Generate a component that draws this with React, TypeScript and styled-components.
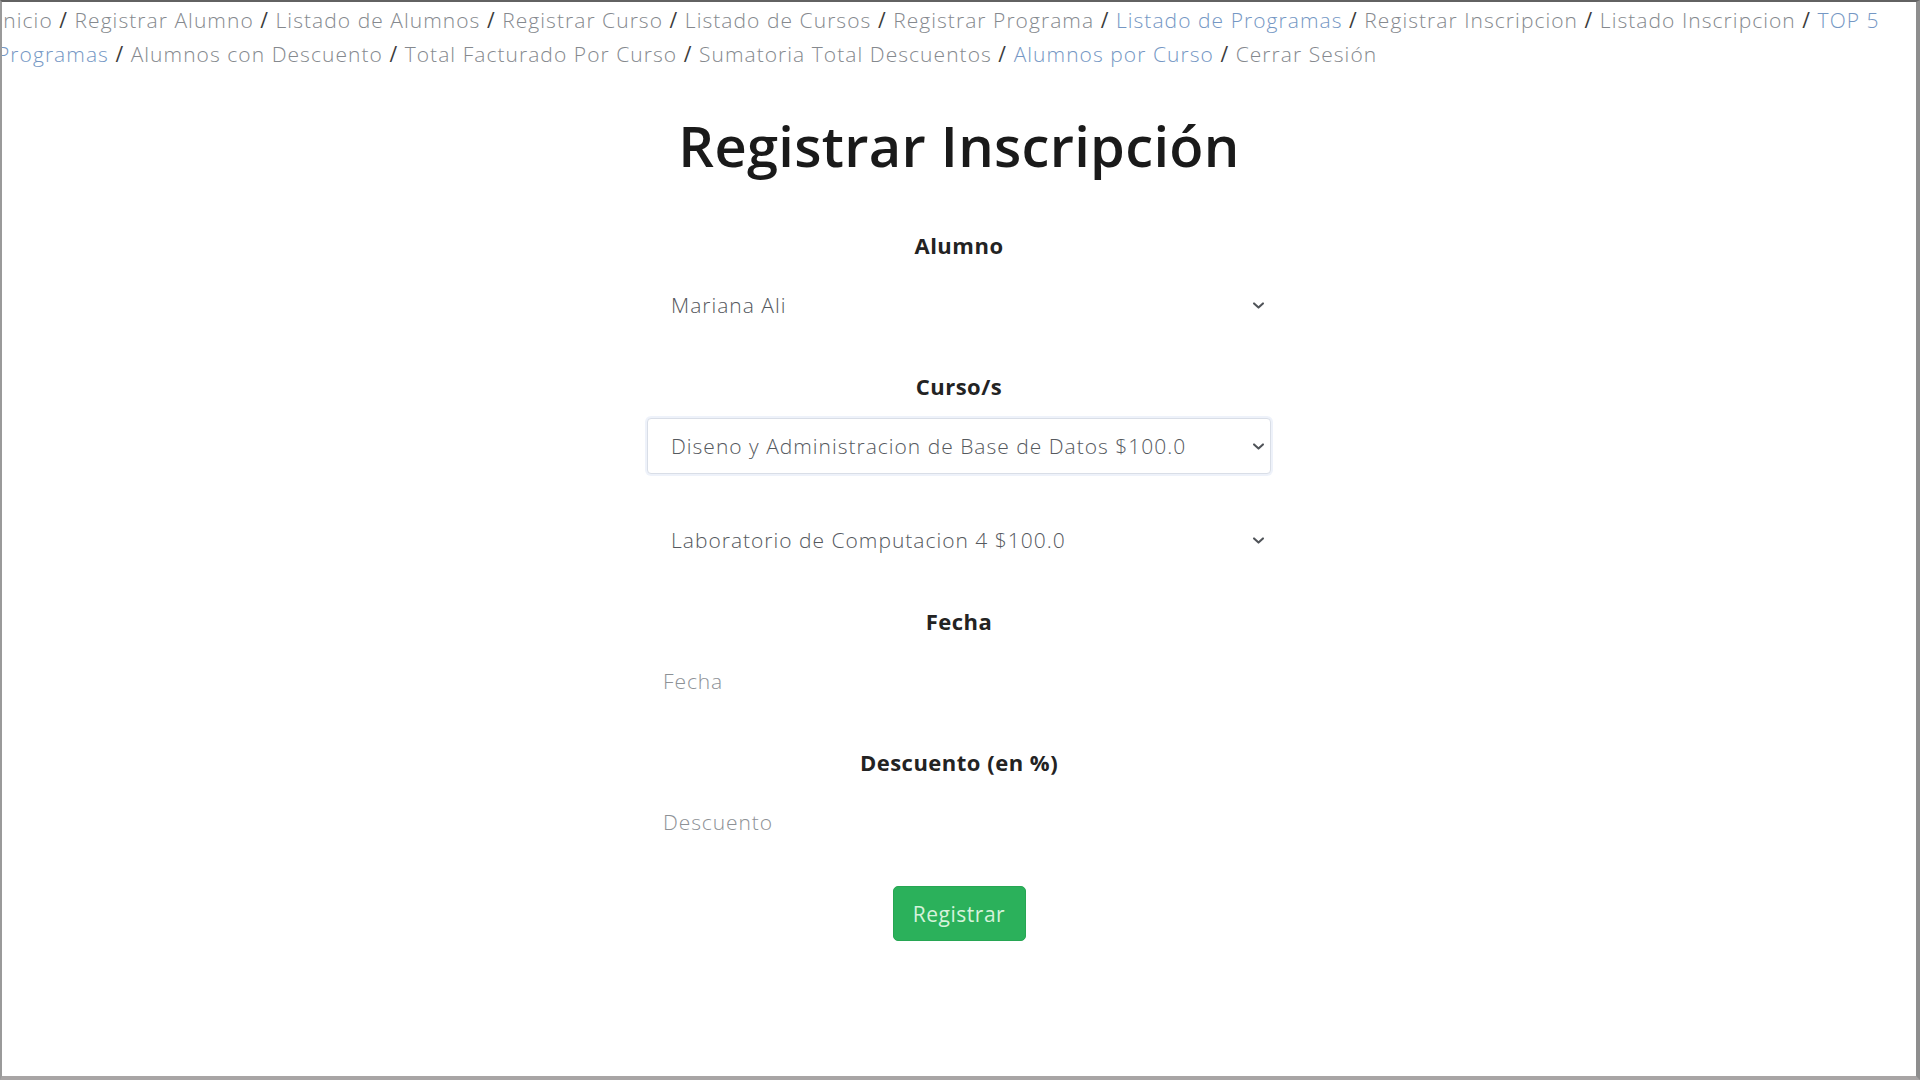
import React from "react";
import styled, { createGlobalStyle } from "styled-components";

const GlobalStyle = createGlobalStyle`
  html, body {
    margin: 0;
    padding: 0;
    background: #ffffff;
  }
  body {
    font-family: "Open Sans", "Noto Sans", "Liberation Sans", sans-serif;
    color: #212529;
  }
  * { box-sizing: border-box; }
`;

const Frame = styled.div`
  min-height: 100vh;
  overflow: hidden;
  background: #ffffff;
  border-top: 2px solid #626262;
  border-left: 2px solid #9a9a9a;
  border-right: 4px solid #8e8e8e;
  border-bottom: 4px solid #a8a5a5;
`;

const Nav = styled.nav`
  margin-left: -5px;
  padding-top: 1px;
  font-size: 21px;
  font-weight: 300;
  letter-spacing: 1.05px;
  line-height: 34px;
  color: #3a3a3a;
`;

const NavLink = styled.a<{ $tone: "gray" | "blue" }>`
  color: ${(p) => (p.$tone === "blue" ? "#7597c4" : "#85898e")};
  text-decoration: none;
`;

const Sep = styled.span`
  color: #3c3c3c;
  font-weight: 400;
`;

const Main = styled.main`
  display: flex;
  flex-direction: column;
  align-items: center;
  padding-top: 41px;
`;

const Title = styled.h1`
  margin: 0 0 51px;
  font-size: 56px;
  line-height: 67px;
  font-weight: 600;
  letter-spacing: 0.3px;
  color: #1a1a1a;
  text-align: center;
`;

const Form = styled.form`
  width: 624px;
  display: flex;
  flex-direction: column;
  align-items: stretch;
  gap: 38px;
`;

const Group = styled.div`
  display: flex;
  flex-direction: column;
  gap: 38px;
`;

const Label = styled.label`
  display: block;
  margin-bottom: -21px;
  font-size: 22px;
  line-height: 30px;
  font-weight: 700;
  letter-spacing: 0.5px;
  color: #232323;
  text-align: center;
`;

const chevron =
  "url(\"data:image/svg+xml,%3csvg xmlns='http://www.w3.org/2000/svg' viewBox='0 0 16 16'%3e%3cpath fill='none' stroke='%23505459' stroke-linecap='round' stroke-linejoin='round' stroke-width='2.6' d='m2.5 5.5 5.5 5 5.5-5'/%3e%3c/svg%3e\")";

const Select = styled.select<{ $focused?: boolean }>`
  display: block;
  width: 100%;
  height: 56px;
  padding: 0 40px 0 23px;
  font-family: inherit;
  font-size: 21px;
  font-weight: 300;
  letter-spacing: 1px;
  color: #55595e;
  background-color: #ffffff;
  background-image: ${chevron};
  background-repeat: no-repeat;
  background-position: right 3px center;
  background-size: 17px 13px;
  border: 1px solid ${(p) => (p.$focused ? "#d9dee7" : "transparent")};
  border-radius: 4px;
  box-shadow: ${(p) => (p.$focused ? "0 0 0 2px rgba(226, 234, 246, 0.6)" : "none")};
  appearance: none;
  -webkit-appearance: none;
  outline: none;
`;

const Input = styled.input`
  display: block;
  width: 100%;
  height: 56px;
  padding: 0 15px;
  font-family: inherit;
  font-size: 21px;
  font-weight: 300;
  letter-spacing: 0.9px;
  color: #55595e;
  background: #ffffff;
  border: 1px solid transparent;
  border-radius: 4px;
  outline: none;
  &::placeholder {
    color: #8d9196;
  }
`;

const Actions = styled.div`
  display: flex;
  justify-content: center;
  margin-top: -2px;
`;

const Button = styled.button`
  width: 133px;
  height: 55px;
  font-family: inherit;
  font-size: 21px;
  letter-spacing: 0.5px;
  color: #d6f3db;
  background: #2bb15b;
  border: 1px solid #27a653;
  border-radius: 5px;
  cursor: pointer;
`;

type Tone = "gray" | "blue";
const links: { label: string; tone: Tone }[] = [
  { label: "Inicio", tone: "gray" },
  { label: "Registrar Alumno", tone: "gray" },
  { label: "Listado de Alumnos", tone: "gray" },
  { label: "Registrar Curso", tone: "gray" },
  { label: "Listado de Cursos", tone: "gray" },
  { label: "Registrar Programa", tone: "gray" },
  { label: "Listado de Programas", tone: "blue" },
  { label: "Registrar Inscripcion", tone: "gray" },
  { label: "Listado Inscripcion", tone: "gray" },
  { label: "TOP 5 Programas", tone: "blue" },
  { label: "Alumnos con Descuento", tone: "gray" },
  { label: "Total Facturado Por Curso", tone: "gray" },
  { label: "Sumatoria Total Descuentos", tone: "gray" },
  { label: "Alumnos por Curso", tone: "blue" },
  { label: "Cerrar Sesión", tone: "gray" },
];

export default function App() {
  return (
    <>
      <GlobalStyle />
      <Frame>
        <Nav>
          {links.map((l, i) => (
            <React.Fragment key={l.label}>
              {i > 0 && <Sep> / </Sep>}
              <NavLink href="#" $tone={l.tone}>
                {l.label}
              </NavLink>
            </React.Fragment>
          ))}
        </Nav>
        <Main>
          <Title>Registrar Inscripción</Title>
          <Form onSubmit={(e) => e.preventDefault()}>
            <Group>
              <Label>Alumno</Label>
              <Select defaultValue="mariana">
                <option value="mariana">Mariana Ali</option>
              </Select>
            </Group>
            <Group>
              <Label>Curso/s</Label>
              <Select $focused defaultValue="bd">
                <option value="bd">Diseno y Administracion de Base de Datos $100.0</option>
              </Select>
              <Select defaultValue="lab">
                <option value="lab">Laboratorio de Computacion 4 $100.0</option>
              </Select>
            </Group>
            <Group>
              <Label>Fecha</Label>
              <Input type="text" placeholder="Fecha" />
            </Group>
            <Group>
              <Label>Descuento (en %)</Label>
              <Input type="text" placeholder="Descuento" />
            </Group>
            <Actions>
              <Button type="submit">Registrar</Button>
            </Actions>
          </Form>
        </Main>
      </Frame>
    </>
  );
}
